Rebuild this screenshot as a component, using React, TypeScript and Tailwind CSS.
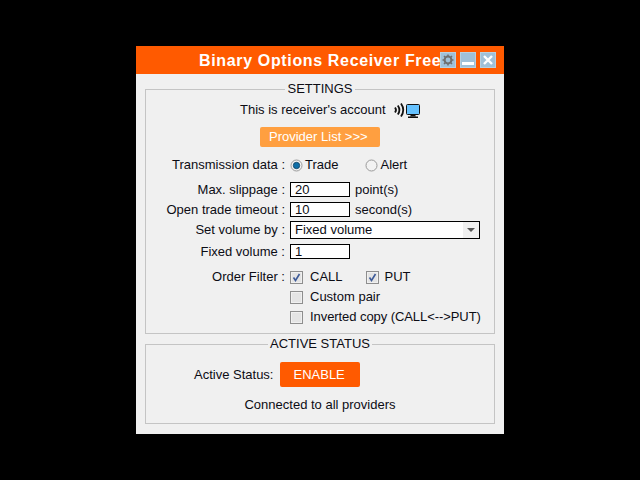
import React from 'react';

const Label = ({ children }: { children: React.ReactNode }) => (
  <div className="w-[139px] text-right whitespace-pre">{children}</div>
);

const Radio = ({ checked }: { checked?: boolean }) => (
  <svg width="13" height="13" viewBox="0 0 13 13" className="shrink-0 block">
    <circle cx="6.5" cy="6.5" r="5.5" fill="#f2f2f2" stroke="#9a9a9a" />
    {checked && <circle cx="6.5" cy="6.5" r="3.2" fill="#0f6fa8" stroke="#10405f" strokeWidth="0.8" />}
  </svg>
);

const Check = ({ checked }: { checked?: boolean }) => (
  <svg width="13" height="13" viewBox="0 0 13 13" className="shrink-0 block">
    <rect x="0.5" y="0.5" width="12" height="12" fill="#f0f0f0" stroke="#8e8e8e" />
    <rect x="2" y="2" width="9" height="9" fill="#e4e4e4" />
    {checked && <path d="M3.5 6.5 L5.5 9.5 L9.5 3" fill="none" stroke="#3d5a98" strokeWidth="1.6" />}
  </svg>
);

const TextBox = ({ value }: { value: string }) => (
  <div className="w-[60px] h-[15px] bg-white border border-black pl-[4px] leading-[13px]">{value}</div>
);

const TitleBtn = ({ children }: { children: React.ReactNode }) => (
  <div className="w-[16px] h-[16px] bg-[#9fc0d8] border border-[#b8d0e0] flex items-center justify-center">
    {children}
  </div>
);

export default function App() {
  return (
    <div
      className="w-[640px] h-[480px] bg-black flex justify-center pt-[46px] text-[13px] text-[#0c0c14]"
      style={{ fontFamily: '"Liberation Sans", Arial, sans-serif' }}
    >
      <div className="w-[368px] h-[388px] bg-[#f0f0f0] flex flex-col">
        <div className="h-[28px] bg-[#ff5a00] flex items-center relative shrink-0">
          <div className="ml-[63px] pt-[2px] text-white font-bold text-[16px] tracking-[0.65px] whitespace-nowrap">
            Binary Options Receiver Free
          </div>
          <div className="absolute right-[8px] top-[6px] flex gap-[4px]">
            <TitleBtn>
              <svg width="12" height="12" viewBox="0 0 12 12">
                <circle cx="6" cy="6" r="3.4" fill="none" stroke="#6f6f6f" strokeWidth="2" />
                <path d="M6 0.5V2.5M6 9.5V11.5M0.5 6H2.5M9.5 6H11.5M2 2L3.4 3.4M8.6 8.6L10 10M2 10L3.4 8.6M8.6 3.4L10 2" stroke="#6f6f6f" strokeWidth="1.5" />
              </svg>
            </TitleBtn>
            <TitleBtn>
              <div className="w-[12px] h-[3px] bg-white mt-[6px]" />
            </TitleBtn>
            <TitleBtn>
              <svg width="12" height="12" viewBox="0 0 12 12">
                <path d="M2 2L10 10M10 2L2 10" stroke="#fff" strokeWidth="2.4" />
              </svg>
            </TitleBtn>
          </div>
        </div>

        <fieldset className="mx-[9px] mt-[7px] h-[253px] border border-[#c4c4c4] shrink-0">
          <legend className="mx-auto px-[2px] text-[13px] leading-[16px]">SETTINGS</legend>
          <div className="flex items-center h-[22px] mt-[2px] pl-[94px]">
            <span className="w-[145px] whitespace-nowrap">This is receiver's account</span>
            <svg width="34" height="16" viewBox="0 0 34 16" className="ml-[8px]">
              <path d="M2 5.5Q4 8 2 10.5M4.8 3.5Q8 8 4.8 12.5M8 1.5Q12.5 8 8 14.5" fill="none" stroke="#111" strokeWidth="1.8" />
              <rect x="13.5" y="2.5" width="13" height="10" rx="1" fill="#66c2ff" stroke="#111" />
              <path d="M18 12.5H22L23 14.5H17Z" fill="#111" />
              <rect x="15" y="14.5" width="10" height="1.5" fill="#111" />
            </svg>
          </div>
          <div className="flex justify-center mt-[6px]">
            <div className="w-[120px] h-[20px] bg-[#ff9f40] rounded-[2px] text-white leading-[20px] pl-[9px]">
              Provider List &gt;&gt;&gt;
            </div>
          </div>
          <div className="flex items-center h-[16px] mt-[10px] gap-[5px]">
            <Label>Transmission data :</Label>
            <Radio checked />
            <span className="-ml-[3px]">Trade</span>
            <span className="ml-[22px]"><Radio /></span>
            <span className="-ml-[3px]">Alert</span>
          </div>
          <div className="flex items-center h-[15px] mt-[9px] gap-[5px]">
            <Label>Max. slippage :</Label>
            <TextBox value="20" />
            <span>point(s)</span>
          </div>
          <div className="flex items-center h-[15px] mt-[5px] gap-[5px]">
            <Label>Open trade timeout :</Label>
            <TextBox value="10" />
            <span>second(s)</span>
          </div>
          <div className="flex items-center h-[18px] mt-[4px] gap-[5px]">
            <Label>Set volume by :</Label>
            <div className="w-[190px] h-[18px] bg-white border border-black pl-[4px] flex items-center justify-between">
              <span>Fixed volume</span>
              <div className="w-[16px] h-full bg-[#f0f0f0] flex items-center justify-center">
                <div className="w-0 h-0 border-x-[4px] border-x-transparent border-t-[4px] border-t-[#555]" />
              </div>
            </div>
          </div>
          <div className="flex items-center h-[15px] mt-[5px] gap-[5px]">
            <Label>Fixed volume :</Label>
            <TextBox value="1" />
          </div>
          <div className="flex items-center h-[16px] mt-[10px] gap-[5px]">
            <Label>Order Filter :</Label>
            <Check checked />
            <span className="ml-[2px]">CALL</span>
            <span className="ml-[18px]"><Check checked /></span>
            <span className="ml-[1px]">PUT</span>
          </div>
          <div className="flex items-center h-[16px] mt-[4px] gap-[7px] pl-[144px]">
            <Check />
            <span>Custom pair</span>
          </div>
          <div className="flex items-center h-[16px] mt-[4px] gap-[7px] pl-[144px]">
            <Check />
            <span className="tracking-[-0.07px]">Inverted copy (CALL&lt;--&gt;PUT)</span>
          </div>
        </fieldset>

        <fieldset className="mx-[9px] mt-[2px] h-[88px] border border-[#c4c4c4] shrink-0">
          <legend className="mx-auto px-[2px] text-[13px] leading-[16px]">ACTIVE STATUS</legend>
          <div className="flex items-center mt-[10px] h-[25px]">
            <span className="ml-[48px]">Active Status:</span>
            <div className="ml-[7px] w-[80px] h-[25px] bg-[#ff5a00] rounded-[2px] text-white leading-[25px] pl-[13px]">
              ENABLE
            </div>
          </div>
          <div className="text-center mt-[10px] leading-[16px]">Connected to all providers</div>
        </fieldset>
      </div>
    </div>
  );
}
